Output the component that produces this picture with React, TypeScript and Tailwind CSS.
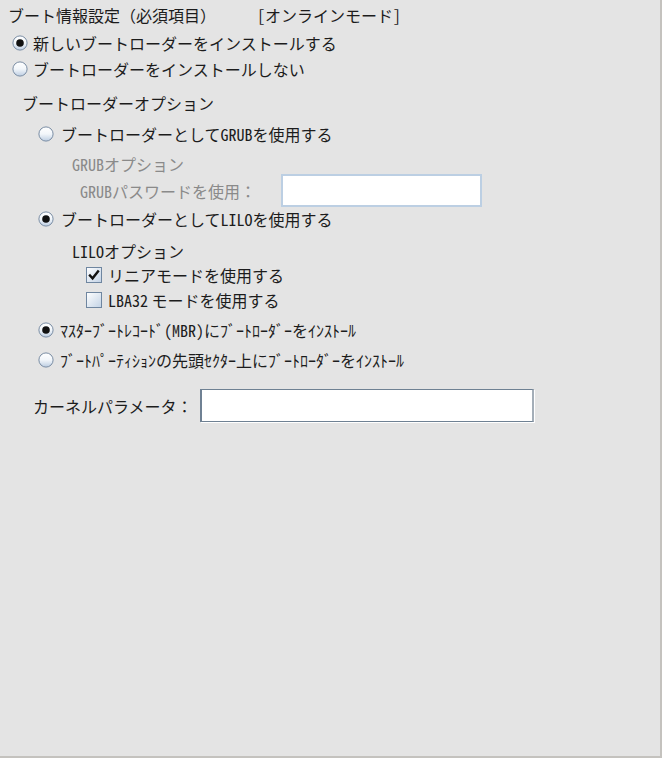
import React, { useId } from "react";

const hw = "[font-feature-settings:'hwid']";

function Radio({ checked }: { checked?: boolean }) {
  const id = useId().replace(/:/g, "");
  return (
    <svg width="16" height="16" viewBox="0 0 16 16" className="shrink-0">
      <defs>
        <linearGradient id={`g${id}`} x1="0" y1="0" x2="0" y2="1">
          <stop offset="0" stopColor="#ffffff" />
          <stop offset="0.5" stopColor="#f2f6fa" />
          <stop offset="1" stopColor="#bccde2" />
        </linearGradient>
      </defs>
      <circle cx="8" cy="8" r="7.1" fill={`url(#g${id})`} stroke="#7a8da4" strokeWidth="1" />
      {checked && <circle cx="8" cy="8" r="3.8" fill="#111111" />}
    </svg>
  );
}

function Check({ checked }: { checked?: boolean }) {
  const id = useId().replace(/:/g, "");
  return (
    <svg width="16" height="16" viewBox="0 0 16 16" className="shrink-0">
      <defs>
        <linearGradient id={`c${id}`} x1="0" y1="0" x2="1" y2="1">
          <stop offset="0" stopColor="#ffffff" />
          <stop offset="1" stopColor="#c2d2e5" />
        </linearGradient>
      </defs>
      <rect x="0.5" y="0.5" width="15" height="15" fill={`url(#c${id})`} stroke="#6f86a0" />
      {checked && (
        <path d="M4 8.5 L6.6 11.3 L12 4.5" fill="none" stroke="#111" strokeWidth="2.4" strokeLinecap="square" />
      )}
    </svg>
  );
}

export default function App() {
  return (
    <div className="w-[662px] h-[758px] bg-[#e4e4e4] border-r-2 border-b-2 border-[#c4c2be] font-['Noto_Sans_CJK_JP','Noto_Sans_CJK_SC',sans-serif] text-[16px] leading-none text-[#1c1c1c] flex flex-col">
      <div className="h-[30px] flex items-center pl-[8px]">
        <span>ブート情報設定（必須項目）</span>
        <span className="ml-[41px]">
          <span className={hw}>[</span>オンラインモード<span className={hw}>]</span>
        </span>
      </div>
      <div className="h-[26px] flex items-center pl-[12px] gap-[5px]">
        <Radio checked />
        <span>新しいブートローダーをインストールする</span>
      </div>
      <div className="h-[26px] flex items-center pl-[12px] gap-[5px]">
        <Radio />
        <span>ブートローダーをインストールしない</span>
      </div>
      <div className="h-[26px] mt-[8px] flex items-center pl-[22px]">
        <span>ブートローダーオプション</span>
      </div>
      <div className="h-[26px] mt-[5px] flex items-center pl-[38px] gap-[7px]">
        <Radio />
        <span>
          ブートローダーとして<span className={hw}>GRUB</span>を使用する
        </span>
      </div>
      <div className="h-[20px] mt-[7px] flex items-center pl-[72px] text-[#8a8a8a]">
        <span>
          <span className={hw}>GRUB</span>オプション
        </span>
      </div>
      <div className="h-[33px] flex items-center pl-[80px] text-[#8a8a8a]">
        <span className="w-[201px]">
          <span className={hw}>GRUB</span>パスワードを使用：
        </span>
        <div className="w-[201px] h-[33px] bg-white border-2 border-[#bccfe3]" />
      </div>
      <div className="h-[24px] flex items-center pl-[38px] gap-[7px]">
        <Radio checked />
        <span>
          ブートローダーとして<span className={hw}>LILO</span>を使用する
        </span>
      </div>
      <div className="h-[24px] mt-[8px] flex items-center pl-[72px]">
        <span>
          <span className={hw}>LILO</span>オプション
        </span>
      </div>
      <div className="h-[23px] flex items-center pl-[86px] gap-[6px]">
        <Check checked />
        <span>リニアモードを使用する</span>
      </div>
      <div className="h-[26px] mt-[1px] flex items-center pl-[86px] gap-[6px]">
        <Check />
        <span>
          <span className={hw}>LBA32</span> モードを使用する
        </span>
      </div>
      <div className="h-[24px] mt-[5px] flex items-center pl-[38px] gap-[6px]">
        <Radio checked />
        <span>
          ﾏｽﾀｰﾌﾞｰﾄﾚｺｰﾄﾞ<span className={hw}>(MBR)</span>にﾌﾞｰﾄﾛｰﾀﾞｰをｲﾝｽﾄｰﾙ
        </span>
      </div>
      <div className="h-[26px] mt-[5px] flex items-center pl-[38px] gap-[6px]">
        <Radio />
        <span>ﾌﾞｰﾄﾊﾟｰﾃｨｼｮﾝの先頭ｾｸﾀｰ上にﾌﾞｰﾄﾛｰﾀﾞｰをｲﾝｽﾄｰﾙ</span>
      </div>
      <div className="h-[33px] mt-[16px] flex items-center pl-[33px]">
        <span className="w-[167px]">カーネルパラメータ：</span>
        <div className="w-[334px] h-[33px] bg-white border-t border-b border-l-2 border-r-2 border-[#6f8193] border-r-[#a4aeb8] shadow-[1px_1px_0_#ffffff]" />
      </div>
    </div>
  );
}
